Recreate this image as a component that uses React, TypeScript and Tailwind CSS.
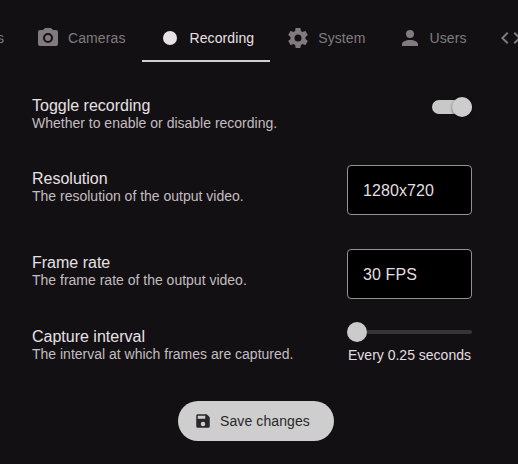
import type { ReactNode } from "react";

const icons = {
  camera:
    "M4,4H7L9,2H15L17,4H20A2,2 0 0,1 22,6V18A2,2 0 0,1 20,20H4A2,2 0 0,1 2,18V6A2,2 0 0,1 4,4M12,7A5,5 0 0,0 7,12A5,5 0 0,0 12,17A5,5 0 0,0 17,12A5,5 0 0,0 12,7M12,9A3,3 0 0,1 15,12A3,3 0 0,1 12,15A3,3 0 0,1 9,12A3,3 0 0,1 12,9Z",
  record: "M19,12A7,7 0 0,1 12,19A7,7 0 0,1 5,12A7,7 0 0,1 12,5A7,7 0 0,1 19,12Z",
  cog: "M12,15.5A3.5,3.5 0 0,1 8.5,12A3.5,3.5 0 0,1 12,8.5A3.5,3.5 0 0,1 15.5,12A3.5,3.5 0 0,1 12,15.5M19.43,12.97C19.47,12.65 19.5,12.33 19.5,12C19.5,11.67 19.47,11.34 19.43,11L21.54,9.37C21.73,9.22 21.78,8.95 21.66,8.73L19.66,5.27C19.54,5.05 19.27,4.96 19.05,5.05L16.56,6.05C16.04,5.66 15.5,5.32 14.87,5.07L14.5,2.42C14.46,2.18 14.25,2 14,2H10C9.75,2 9.54,2.18 9.5,2.42L9.13,5.07C8.5,5.32 7.96,5.66 7.44,6.05L4.95,5.05C4.73,4.96 4.46,5.05 4.34,5.27L2.34,8.73C2.21,8.95 2.27,9.22 2.46,9.37L4.57,11C4.53,11.34 4.5,11.67 4.5,12C4.5,12.33 4.53,12.65 4.57,12.97L2.46,14.63C2.27,14.78 2.21,15.05 2.34,15.27L4.34,18.73C4.46,18.95 4.73,19.03 4.95,18.95L7.44,17.94C7.96,18.34 8.5,18.68 9.13,18.93L9.5,21.58C9.54,21.82 9.75,22 10,22H14C14.25,22 14.46,21.82 14.5,21.58L14.87,18.93C15.5,18.67 16.04,18.34 16.56,17.94L19.05,18.95C19.27,19.03 19.54,18.95 19.66,18.73L21.66,15.27C21.78,15.05 21.73,14.78 21.54,14.63L19.43,12.97Z",
  account:
    "M12,4A4,4 0 0,1 16,8A4,4 0 0,1 12,12A4,4 0 0,1 8,8A4,4 0 0,1 12,4M12,14C16.42,14 20,15.79 20,18V20H4V18C4,15.79 7.58,14 12,14Z",
  code: "M9.4,16.6L4.8,12L9.4,7.4L8,6L2,12L8,18L9.4,16.6M14.6,16.6L19.2,12L14.6,7.4L16,6L22,12L16,18L14.6,16.6Z",
  save: "M15,9H5V5H15M12,19A3,3 0 0,1 9,16A3,3 0 0,1 12,13A3,3 0 0,1 15,16A3,3 0 0,1 12,19M17,3H5C3.89,3 3,3.9 3,5V19A2,2 0 0,0 5,21H19A2,2 0 0,0 21,19V7L17,3Z",
};

function Icon({ name, className = "size-6" }: { name: keyof typeof icons; className?: string }) {
  return (
    <svg viewBox="0 0 24 24" fill="currentColor" className={`shrink-0 ${className}`}>
      <path d={icons[name]} />
    </svg>
  );
}

function Tab({ icon, label, active }: { icon: keyof typeof icons; label?: string; active?: boolean }) {
  return (
    <button
      className={`flex h-12 shrink-0 items-center gap-2 border-b-2 px-4 pt-0.5 text-sm tracking-[0.1px] ${
        active ? "border-[#d0d0d0] text-[#e8e1e5]" : "border-transparent text-[#817b80]"
      }`}
    >
      <Icon name={icon} />
      {label && <span>{label}</span>}
    </button>
  );
}

function Setting({ title, text, className, children }: { title: string; text: string; className: string; children: ReactNode }) {
  return (
    <div className={`flex justify-between ${className}`}>
      <div>
        <div className="pt-px text-base leading-[18px] text-[#e6e1e5]">{title}</div>
        <div className="-mt-px text-sm leading-[18px] text-[#c3bdc1]">{text}</div>
      </div>
      {children}
    </div>
  );
}

function Select({ value }: { value: string }) {
  return (
    <button className="flex h-[50px] w-[125px] items-center rounded border border-[#949094] bg-black px-[15px] pt-0.5 text-base tracking-[0.1px] text-[#e2dfe1]">
      {value}
    </button>
  );
}

export default function App() {
  return (
    <main className="h-[464px] w-[518px] overflow-hidden bg-[#131013] font-['Liberation_Sans',Arial,sans-serif]">
      <nav className="flex overflow-hidden pt-3.5">
        <div className="flex h-12 w-5 shrink-0 items-center justify-end pr-4 text-sm text-[#817b80]">s</div>
        <Tab icon="camera" label="Cameras" />
        <Tab icon="record" label="Recording" active />
        <Tab icon="cog" label="System" />
        <Tab icon="account" label="Users" />
        <Tab icon="code" />
      </nav>
      <section className="w-[472px] pt-[34px] pl-8">
        <Setting title="Toggle recording" text="Whether to enable or disable recording." className="h-[73px]">
          <div className="mt-[4px] flex h-3.5 w-10 items-center justify-end rounded-full bg-[#c8c8c8]">
            <div className="size-5 shrink-0 rounded-full bg-[#cdcdcd] shadow-[0_1px_3px_rgba(0,0,0,0.5)]" />
          </div>
        </Setting>
        <Setting title="Resolution" text="The resolution of the output video." className="h-[84px]">
          <div className="-mt-1">
            <Select value="1280x720" />
          </div>
        </Setting>
        <Setting title="Frame rate" text="The frame rate of the output video." className="h-[74px]">
          <div className="-mt-1">
            <Select value="30 FPS" />
          </div>
        </Setting>
        <Setting title="Capture interval" text="The interval at which frames are captured." className="h-[74px]">
          <div className="-mt-[5px] w-[125px]">
            <div className="flex h-5 items-center">
              <div className="size-5 rounded-full bg-[#cbcbcb]" />
              <div className="h-1 flex-1 rounded-r-full bg-[#373437]" />
            </div>
            <div className="mt-1 text-center text-sm leading-[18px] whitespace-nowrap text-[#e2dfe1]">Every 0.25 seconds</div>
          </div>
        </Setting>
      </section>
      <div className="flex justify-center pr-[6px]">
        <button className="flex h-10 w-[156px] items-center gap-2 rounded-full bg-[#cecece] pl-4 text-sm tracking-[0.1px] text-[#29272a]">
          <Icon name="save" className="size-[18px]" />
          Save changes
        </button>
      </div>
    </main>
  );
}
